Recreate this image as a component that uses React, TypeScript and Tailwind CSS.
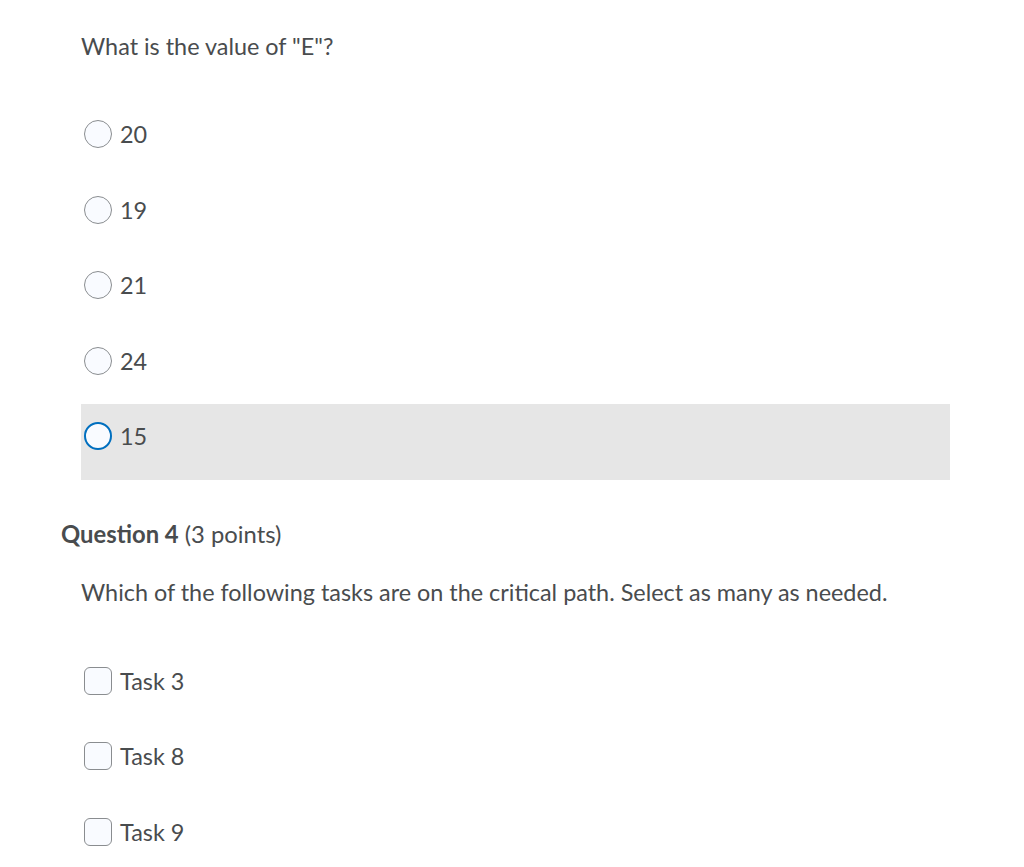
import { useState } from 'react';

const font = { fontFamily: 'Lato, "Open Sans", sans-serif' };

const answers = ['20', '19', '21', '24', '15'];
const tasks = ['Task 3', 'Task 8', 'Task 9'];

function Radio({ active }: { active?: boolean }) {
  return (
    <span
      className={`block h-[28px] w-[28px] shrink-0 rounded-full bg-[#f9fbff] ${
        active ? 'border-2 border-[#006fbf]' : 'border border-[#8a8d90]'
      }`}
    />
  );
}

function Checkbox() {
  return <span className="block h-[28px] w-[28px] shrink-0 rounded-[6px] border border-[#8a8d90] bg-[#f9fbff]" />;
}

export default function App() {
  const [selected] = useState(4);

  return (
    <div className="min-h-[867px] w-[1024px] bg-white text-[#494c4e]" style={font}>
      <div className="pl-[61px] pr-[74px]">
        <div className="pl-[20px]">
          <p className="pt-[32px] text-[23.4px] leading-[28px]">What is the value of "E"?</p>

          <div className="mt-[42px]">
            {answers.map((a, i) => (
              <div
                key={a}
                className={`flex h-[75.5px] items-start gap-[8px] pl-[3px] pt-[18px] ${
                  i === selected ? 'bg-[#e6e6e6]' : ''
                }`}
              >
                <Radio active={i === selected} />
                <span className="text-[23.4px] leading-[28px]">{a}</span>
              </div>
            ))}
          </div>
        </div>

        <h2 className="mt-[40px] text-[23.8px] leading-[28px]">
          <span className="font-bold">Question 4</span> (3 points)
        </h2>

        <div className="pl-[20px]">
          <p className="mt-[30px] text-[23.4px] leading-[28px]">
            Which of the following tasks are on the critical path. Select as many as needed.
          </p>

          <div className="mt-[43px]">
            {tasks.map((t) => (
              <div key={t} className="flex h-[75.5px] items-start gap-[8px] pl-[3px] pt-[18px]">
                <Checkbox />
                <span className="text-[23.4px] leading-[28px]">{t}</span>
              </div>
            ))}
          </div>
        </div>
      </div>
    </div>
  );
}
